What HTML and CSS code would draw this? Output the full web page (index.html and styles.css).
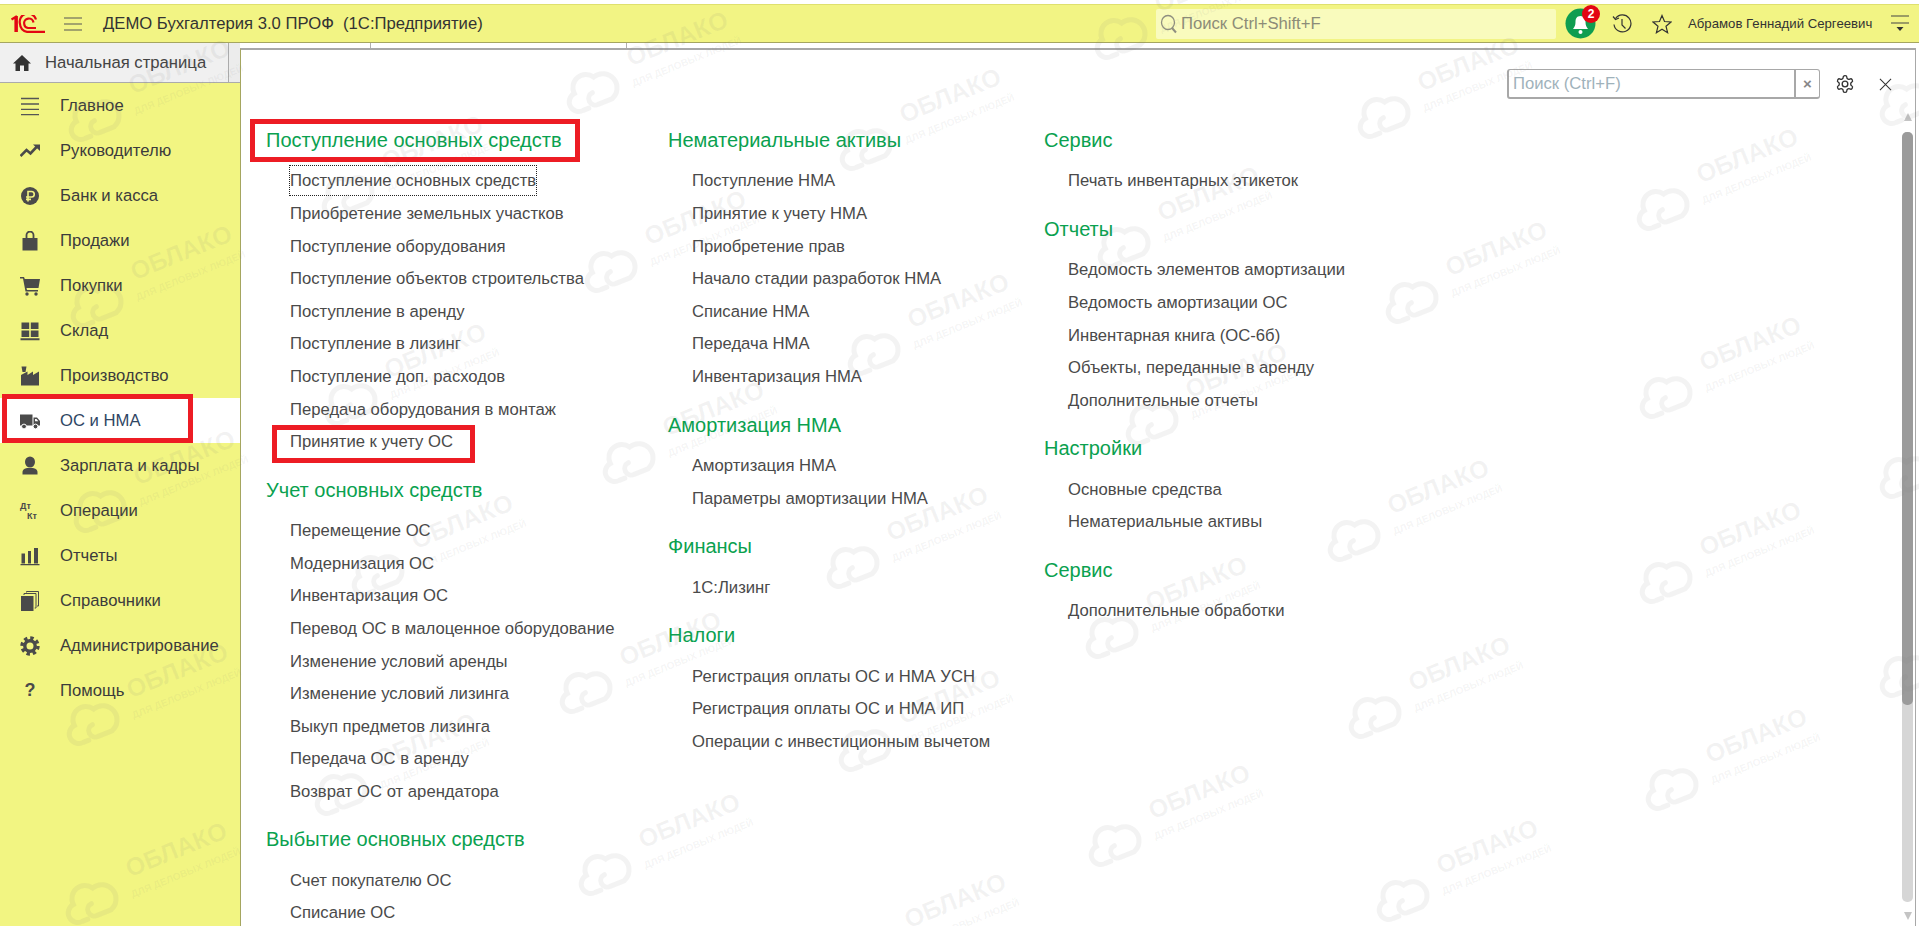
FILE: index.html
```html
<!DOCTYPE html>
<html lang="ru">
<head>
    <meta charset="UTF-8">
    <title>ДЕМО Бухгалтерия 3.0 ПРОФ</title>
    <link rel="stylesheet" href="styles.css">
</head>
<body>
    <header class="topbar">
        <svg class="logo" viewBox="0 0 34 18" fill="none" stroke="#e30613">
            <path d="M0.5 4.5 L4.5 2 V17 M5.8 1 V17" stroke-width="2.2"/>
            <path d="M25 4.5 A8 8 0 0 0 9 9 A8 8 0 0 0 16 16.8 H34" stroke-width="2.2"/>
            <path d="M22.5 7.5 A4.6 4.6 0 0 0 13.2 9 A4.4 4.4 0 0 0 17 13 H25" stroke-width="2.2"/>
        </svg>
        <svg class="burger" viewBox="0 0 18 14" stroke="#555" stroke-width="1.2">
            <path d="M0 1H18M0 7H18M0 13H18"/>
        </svg>
        <div class="app-title">ДЕМО Бухгалтерия 3.0 ПРОФ&nbsp; (1С:Предприятие)</div>
        <div class="global-search">
            <svg class="loupe" viewBox="0 0 18 20" fill="none" stroke="#8f8f80" stroke-width="1.3">
                <ellipse cx="8" cy="8.5" rx="6.5" ry="7"/>
                <path d="M12 14 L16 18.5" stroke-width="2"/>
            </svg>
            <span>Поиск Ctrl+Shift+F</span>
        </div>
        <div class="bell">
            <svg viewBox="0 0 31 31">
                <circle cx="15.5" cy="15.5" r="15" fill="#0f9d50"/>
                <path d="M15.5 8 C11.5 8 10.5 11 10.5 14 C10.5 17.5 9.5 19 8 21 H23 C21.5 19 20.5 17.5 20.5 14 C20.5 11 19.5 8 15.5 8Z" fill="#fff"/>
                <circle cx="15.5" cy="24" r="2" fill="#fff"/>
            </svg>
            <span class="badge">2</span>
        </div>
        <svg class="tool-history" viewBox="0 0 20 22" fill="none" stroke="#333" stroke-width="1.2">
            <path d="M3.5 5.5 A8.5 8.5 0 1 1 2 11.5"/>
            <path d="M1 3.5 L3.5 6.5 L7 5"/>
            <path d="M10 6 V12 L13.5 15.5"/>
        </svg>
        <svg class="tool-star" viewBox="0 0 20 20" fill="none" stroke="#333" stroke-width="1.2">
            <path d="M10 1.5 L12.5 7.5 L19 8 L14 12.2 L15.6 18.7 L10 15.2 L4.4 18.7 L6 12.2 L1 8 L7.5 7.5Z"/>
        </svg>
        <div class="user-name">Абрамов Геннадий Сергеевич</div>
        <svg class="user-menu" viewBox="0 0 18 17">
            <path d="M0 1H18M0 8H18" stroke="#444" stroke-width="1.2"/>
            <path d="M5.5 12H12.5L9 16Z" fill="#333"/>
        </svg>
    </header>

    <div class="workspace">
        <aside class="sidebar">
            <div class="home-tab">
                <svg class="home-icon" viewBox="0 0 18 16" fill="#333">
                    <path d="M9 0 L18 8.5 H15.5 V16 H11 V10.5 H7 V16 H2.5 V8.5 H0Z"/>
                </svg>
                <span>Начальная страница</span>
            </div>
            <nav class="sections">
                <a class="section">
                    <svg viewBox="0 0 20 20" stroke="#555" stroke-width="1.3"><path d="M1 2.5H19M1 8H19M1 13.3H19M1 18.7H19"/></svg>
                    Главное
                </a>
                <a class="section">
                    <svg viewBox="0 0 20 20" fill="none" stroke="#4a4a4a" stroke-width="2.6"><path d="M0.5 15 L6.5 9 L10.5 12.5 L17 5.5"/><path d="M13 3.5 H20 V10Z" fill="#4a4a4a" stroke="none"/></svg>
                    Руководителю
                </a>
                <a class="section">
                    <svg viewBox="0 0 20 20" fill="none"><circle cx="10" cy="10" r="9" fill="#4a4a4a"/><path d="M8 15.5 V5.5 H11.5 A2.7 2.7 0 0 1 11.5 11 H6 M6 13.4 H11" stroke="#f2f482" stroke-width="1.6"/></svg>
                    Банк и касса
                </a>
                <a class="section">
                    <svg viewBox="0 0 20 20" fill="#4a4a4a"><path d="M2.5 7 H17.5 V19.5 H2.5Z"/><path d="M6.5 8 V4 A3.5 3.5 0 0 1 13.5 4 V8" fill="none" stroke="#4a4a4a" stroke-width="1.8"/></svg>
                    Продажи
                </a>
                <a class="section">
                    <svg viewBox="0 0 20 20" fill="#4a4a4a"><path d="M0 1 H4 L4.8 3 H20 L18.5 12 H6.5 L7 14 H18 V15.5 H5.5 L3 2.5 H0Z"/><circle cx="7" cy="18" r="1.7"/><circle cx="16" cy="18" r="1.7"/></svg>
                    Покупки
                </a>
                <a class="section">
                    <svg viewBox="0 0 20 20" fill="#4a4a4a"><path d="M1.5 1.5H9.2V8H1.5ZM10.8 1.5H18.5V8H10.8ZM1.5 9.5H9.2V16H1.5ZM10.8 9.5H18.5V16H10.8ZM0.5 17.2H19.5V19.2H0.5Z"/></svg>
                    Склад
                </a>
                <a class="section">
                    <svg viewBox="0 0 20 20" fill="#4a4a4a"><path d="M1.5 0.5H6.5L5.5 6H2.5ZM1 9 L7.5 5.5 V9 L13 5.5 V9 L19 5.5 V19.5 H1Z"/></svg>
                    Производство
                </a>
                <a class="section active">
                    <svg viewBox="0 0 20 20" fill="#4a4a4a"><path d="M0 3.5H12.5V14.5H0ZM13.5 6.5H17L20 10V14.5H13.5Z"/><path d="M15 8H16.5L18.3 10.3H15Z" fill="#fff"/><circle cx="4" cy="15.5" r="2.4" stroke="#fff"/><circle cx="15.5" cy="15.5" r="2.4" stroke="#fff"/></svg>
                    ОС и НМА
                </a>
                <a class="section">
                    <svg viewBox="0 0 20 20" fill="#4a4a4a"><ellipse cx="10" cy="6" rx="5" ry="5.5"/><path d="M2.5 18.5 V16 C2.5 13.5 5 12.5 7 12 H13 C15 12.5 17.5 13.5 17.5 16 V18.5Z"/></svg>
                    Зарплата и кадры
                </a>
                <a class="section">
                    <span class="dk-icon"><b>Дт</b><b class="kt">Кт</b></span>
                    Операции
                </a>
                <a class="section">
                    <svg viewBox="0 0 20 20" fill="#4a4a4a"><path d="M1.5 7.5H5V17.5H1.5ZM8 5H11V17.5H8ZM14 2H18V17.5H14ZM0.5 18H19.5V19.2H0.5Z"/></svg>
                    Отчеты
                </a>
                <a class="section">
                    <svg viewBox="0 0 20 20" fill="#4a4a4a"><path d="M1 5H13.5V20H1Z"/><path d="M4 4 V2.5 H16 V17 H14.7 M6.5 1.5 V0.5 H18.5 V15 H17" fill="none" stroke="#4a4a4a" stroke-width="1"/></svg>
                    Справочники
                </a>
                <a class="section">
                    <svg viewBox="0 0 20 20" fill="none" stroke="#4a4a4a"><circle cx="10" cy="10" r="5.2" stroke-width="3.4"/><circle cx="10" cy="10" r="8" stroke-width="3.4" stroke-dasharray="3.4 2.88"/></svg>
                    Администрирование
                </a>
                <a class="section">
                    <span class="help-icon">?</span>
                    Помощь
                </a>
            </nav>
        </aside>

        <main class="content">
            <div class="tab-strip"><span class="tab-tick first"></span><span class="tab-tick"></span></div>
            <section class="panel">
                <div class="panel-tools">
                    <div class="find-box">
                        <span class="find-text">Поиск (Ctrl+F)</span>
                        <span class="find-clear">×</span>
                    </div>
                    <svg class="cog" viewBox="0 0 24 24" fill="none" stroke="#333" stroke-width="1.6">
                        <path d="M12.22 2h-.44a2 2 0 0 0-2 2v.18a2 2 0 0 1-1 1.73l-.43.25a2 2 0 0 1-2 0l-.15-.08a2 2 0 0 0-2.73.73l-.22.38a2 2 0 0 0 .73 2.73l.15.1a2 2 0 0 1 1 1.72v.51a2 2 0 0 1-1 1.74l-.15.09a2 2 0 0 0-.73 2.73l.22.38a2 2 0 0 0 2.73.73l.15-.08a2 2 0 0 1 2 0l.43.25a2 2 0 0 1 1 1.73V20a2 2 0 0 0 2 2h.44a2 2 0 0 0 2-2v-.18a2 2 0 0 1 1-1.73l.43-.25a2 2 0 0 1 2 0l.15.08a2 2 0 0 0 2.73-.73l.22-.39a2 2 0 0 0-.73-2.73l-.15-.08a2 2 0 0 1-1-1.74v-.5a2 2 0 0 1 1-1.74l.15-.09a2 2 0 0 0 .73-2.73l-.22-.38a2 2 0 0 0-2.73-.73l-.15.08a2 2 0 0 1-2 0l-.43-.25a2 2 0 0 1-1-1.73V4a2 2 0 0 0-2-2z"/>
                        <circle cx="12" cy="12" r="3.4"/>
                    </svg>
                    <svg class="close" viewBox="0 0 14 14" stroke="#333" stroke-width="1.1"><path d="M1 1L13 13M13 1L1 13"/></svg>
                </div>
                <div class="panel-body">
                    <div class="columns">
                        <div class="col col-first">
                            <h3>Поступление основных средств</h3>
                            <a><span class="focused">Поступление основных средств</span></a>
                            <a>Приобретение земельных участков</a>
                            <a>Поступление оборудования</a>
                            <a>Поступление объектов строительства</a>
                            <a>Поступление в аренду</a>
                            <a>Поступление в лизинг</a>
                            <a>Поступление доп. расходов</a>
                            <a>Передача оборудования в монтаж</a>
                            <a>Принятие к учету ОС</a>
                            <h3>Учет основных средств</h3>
                            <a>Перемещение ОС</a>
                            <a>Модернизация ОС</a>
                            <a>Инвентаризация ОС</a>
                            <a>Перевод ОС в малоценное оборудование</a>
                            <a>Изменение условий аренды</a>
                            <a>Изменение условий лизинга</a>
                            <a>Выкуп предметов лизинга</a>
                            <a>Передача ОС в аренду</a>
                            <a>Возврат ОС от арендатора</a>
                            <h3>Выбытие основных средств</h3>
                            <a>Счет покупателю ОС</a>
                            <a>Списание ОС</a>
                        </div>
                        <div class="col col-second">
                            <h3>Нематериальные активы</h3>
                            <a>Поступление НМА</a>
                            <a>Принятие к учету НМА</a>
                            <a>Приобретение прав</a>
                            <a>Начало стадии разработок НМА</a>
                            <a>Списание НМА</a>
                            <a>Передача НМА</a>
                            <a>Инвентаризация НМА</a>
                            <h3>Амортизация НМА</h3>
                            <a>Амортизация НМА</a>
                            <a>Параметры амортизации НМА</a>
                            <h3>Финансы</h3>
                            <a>1С:Лизинг</a>
                            <h3>Налоги</h3>
                            <a>Регистрация оплаты ОС и НМА УСН</a>
                            <a>Регистрация оплаты ОС и НМА ИП</a>
                            <a>Операции с инвестиционным вычетом</a>
                        </div>
                        <div class="col">
                            <h3>Сервис</h3>
                            <a>Печать инвентарных этикеток</a>
                            <h3>Отчеты</h3>
                            <a>Ведомость элементов амортизации</a>
                            <a>Ведомость амортизации ОС</a>
                            <a>Инвентарная книга (ОС-6б)</a>
                            <a>Объекты, переданные в аренду</a>
                            <a>Дополнительные отчеты</a>
                            <h3>Настройки</h3>
                            <a>Основные средства</a>
                            <a>Нематериальные активы</a>
                            <h3>Сервис</h3>
                            <a>Дополнительные обработки</a>
                        </div>
                    </div>
                    <div class="scrollbar">
                        <span class="arrow up"></span>
                        <div class="track"><div class="thumb"></div></div>
                        <span class="arrow down"></span>
                    </div>
                </div>
            </section>
        </main>
    </div>

    <!-- watermark tiles, scattered over the whole window -->
    <svg class="watermarks" width="1919" height="926">
        <defs>
            <g id="wm" transform="rotate(-22)">
                <text class="wm-title" y="9">ОБЛАКО</text>
                <text class="wm-sub" y="29">ДЛЯ ДЕЛОВЫХ ЛЮДЕЙ</text>
                <path class="wm-cloud" d="M-108 32 H-114 A9.5 9.5 0 0 1 -116 13 A13 13 0 0 1 -92 5 A10 10 0 0 1 -83 32 H-98 A6.5 6.5 0 0 1 -99 19"/>
            </g>
        </defs>
        <use href="#wm" x="179" y="66"/>
        <use href="#wm" x="181" y="252"/>
        <use href="#wm" x="184" y="457"/>
        <use href="#wm" x="177" y="670"/>
        <use href="#wm" x="176" y="849"/>
        <use href="#wm" x="432" y="142"/>
        <use href="#wm" x="435" y="350"/>
        <use href="#wm" x="462" y="521"/>
        <use href="#wm" x="425" y="740"/>
        <use href="#wm" x="677" y="38"/>
        <use href="#wm" x="695" y="217"/>
        <use href="#wm" x="713" y="408"/>
        <use href="#wm" x="670" y="638"/>
        <use href="#wm" x="689" y="820"/>
        <use href="#wm" x="950" y="95"/>
        <use href="#wm" x="958" y="300"/>
        <use href="#wm" x="937" y="513"/>
        <use href="#wm" x="949" y="696"/>
        <use href="#wm" x="955" y="900"/>
        <use href="#wm" x="1205" y="-16"/>
        <use href="#wm" x="1208" y="193"/>
        <use href="#wm" x="1236" y="370"/>
        <use href="#wm" x="1196" y="583"/>
        <use href="#wm" x="1199" y="791"/>
        <use href="#wm" x="1468" y="63"/>
        <use href="#wm" x="1496" y="248"/>
        <use href="#wm" x="1438" y="486"/>
        <use href="#wm" x="1459" y="663"/>
        <use href="#wm" x="1487" y="846"/>
        <use href="#wm" x="1747" y="155"/>
        <use href="#wm" x="1750" y="343"/>
        <use href="#wm" x="1750" y="528"/>
        <use href="#wm" x="1756" y="735"/>
        <use href="#wm" x="1990" y="50"/>
        <use href="#wm" x="1990" y="423"/>
        <use href="#wm" x="1990" y="622"/>
    </svg>

    <!-- red annotation frames drawn on top of the shot -->
    <div class="mark mark-section"></div>
    <div class="mark mark-heading"></div>
    <div class="mark mark-item"></div>
</body>
</html>
```

FILE: styles.css
```css
* {
    box-sizing: border-box;
}

html, body {
    height: 926px;
    overflow: hidden;
}

body {
    margin: 0;
    padding-top: 4px;
    display: flex;
    flex-direction: column;
    font-family: "Liberation Sans", Arial, sans-serif;
    font-size: 16.67px;
    color: #444;
    background-color: #ffffff;
}

/* top bar */
.topbar {
    height: 39px;
    flex: none;
    display: flex;
    align-items: center;
    padding-left: 11px;
    background-color: #f2f484;
    border-top: 1px solid #dfe06e;
    border-bottom: 1px solid #a5a660;
}

.logo {
    width: 34px;
    height: 18px;
}

.burger {
    width: 18px;
    height: 14px;
    margin-left: 19px;
}

.app-title {
    flex: 1;
    margin-left: 21px;
    color: #333;
}

.global-search {
    width: 400px;
    height: 30px;
    display: flex;
    align-items: center;
    padding-left: 4px;
    background-color: #f9fbbd;
    border-radius: 2px;
    color: #8c8c78;
}

.loupe {
    width: 18px;
    height: 20px;
    margin-right: 3px;
}

.bell {
    position: relative;
    width: 31px;
    height: 31px;
    margin-left: 9px;
}

.bell svg {
    display: block;
}

.badge {
    position: absolute;
    top: -3px;
    right: -4px;
    width: 18px;
    height: 18px;
    border-radius: 50%;
    background-color: #e30613;
    color: #fff;
    font-size: 12px;
    font-weight: bold;
    line-height: 18px;
    text-align: center;
}

.tool-history {
    width: 20px;
    height: 22px;
    margin-left: 16px;
}

.tool-star {
    width: 20px;
    height: 20px;
    margin-left: 20px;
}

.user-name {
    margin-left: 16px;
    width: 186px;
    font-size: 13.2px;
    color: #333;
    white-space: nowrap;
}

.user-menu {
    width: 18px;
    height: 17px;
    margin-left: 17px;
    margin-right: 10px;
}

/* window below the bar */
.workspace {
    flex: 1;
    display: flex;
    min-height: 0;
}

.sidebar {
    width: 240px;
    flex: none;
    background-color: #f2f582;
}

.home-tab {
    height: 40px;
    display: flex;
    align-items: center;
    padding-left: 13px;
    color: #444;
    background: linear-gradient(to right, #f0f0f0 228px, #ababab 228px, #ababab 229px, #ececec 229px);
    border-bottom: 1px solid #ababab;
}

.home-icon {
    width: 18px;
    height: 16px;
    margin-right: 14px;
}

.section {
    height: 45px;
    display: flex;
    align-items: center;
    gap: 20px;
    padding-left: 20px;
    color: #3c3c3c;
}

.section svg {
    width: 20px;
    height: 20px;
    flex: none;
}

.section.active {
    background-color: #fff;
    color: #2f4664;
}

.dk-icon {
    width: 20px;
    height: 20px;
    display: flex;
    flex-direction: column;
    font-size: 9px;
    line-height: 10px;
    color: #4a4a4a;
}

.dk-icon .kt {
    margin-left: 7px;
}

.help-icon {
    width: 20px;
    font-size: 18px;
    font-weight: bold;
    text-align: center;
    color: #4a4a4a;
}

.content {
    flex: 1;
    display: flex;
    flex-direction: column;
    min-width: 0;
}

.tab-strip {
    height: 5px;
    flex: none;
    display: flex;
}

.tab-tick {
    width: 256px;
    border-right: 1px solid #b0b0b0;
}

.tab-tick.first {
    width: 131px;
}

.panel {
    flex: 1;
    min-height: 0;
    display: flex;
    flex-direction: column;
    margin-right: 3px;
    border-top: 2px solid #a8a8a8;
    border-left: 1px solid #a5a660;
    border-right: 1px solid #a8a8a8;
    background-color: #fff;
}

.panel-tools {
    height: 58px;
    flex: none;
    display: flex;
    align-items: flex-start;
    justify-content: flex-end;
    padding-top: 19px;
    padding-right: 23px;
}

.find-box {
    width: 313px;
    height: 30px;
    display: flex;
    border: 1px solid #a8a8a8;
    border-width: 1px 1px 2px 2px;
    border-radius: 3px;
}

.find-text {
    flex: 1;
    padding-left: 4px;
    line-height: 27px;
    color: #9fb2bb;
}

.find-clear {
    width: 25px;
    line-height: 27px;
    text-align: center;
    font-weight: bold;
    font-size: 15px;
    color: #888;
    border-left: 2px solid #a8a8a8;
}

.cog {
    width: 20px;
    height: 20px;
    margin-top: 5px;
    margin-left: 15px;
}

.close {
    width: 13px;
    height: 13px;
    margin-top: 9px;
    margin-left: 24px;
}

.panel-body {
    flex: 1;
    min-height: 0;
    display: flex;
}

.columns {
    flex: 1;
    display: flex;
    padding: 20px 0 0 25px;
    overflow: hidden;
}

.col {
    flex: none;
}

.col-first {
    width: 402px;
}

.col-second {
    width: 376px;
}

.col h3 {
    height: 24px;
    margin: 19px 0 13.4px;
    font-size: 20px;
    font-weight: normal;
    line-height: 24px;
    color: #0aa14f;
}

.col h3:first-child {
    margin-top: 0;
}

.col a {
    display: block;
    height: 32.6px;
    padding-left: 24px;
    line-height: 32.6px;
    color: #4a4a4a;
    white-space: nowrap;
}

.focused {
    padding: 5px 0;
    outline: 1px dotted #222;
}

.scrollbar {
    width: 11px;
    flex: none;
    display: flex;
    flex-direction: column;
    align-items: center;
    margin-right: 2px;
    padding: 5px 0 6px;
}

.arrow {
    width: 0;
    height: 0;
    flex: none;
    border-left: 4px solid transparent;
    border-right: 4px solid transparent;
}

.arrow.up {
    border-bottom: 8px solid #c4c4c4;
    margin-bottom: 11px;
}

.arrow.down {
    border-top: 8px solid #c4c4c4;
    margin-top: 10px;
}

.track {
    flex: 1;
    width: 11px;
    background-color: #d6d6d6;
    border-radius: 5px;
}

.thumb {
    height: 573px;
    background-color: #9b9b9b;
    border-radius: 5px;
}

/* overlays */
.watermarks {
    position: absolute;
    top: 0;
    left: 0;
    pointer-events: none;
}

.wm-title {
    font-size: 25px;
    font-weight: bold;
    text-anchor: middle;
    fill: rgba(120, 120, 120, 0.09);
}

.wm-sub {
    font-size: 10px;
    font-weight: bold;
    text-anchor: middle;
    fill: rgba(120, 120, 120, 0.08);
}

.wm-cloud {
    fill: none;
    stroke: rgba(120, 120, 120, 0.09);
    stroke-width: 5;
    stroke-linecap: round;
}

.mark {
    position: absolute;
    border: 5px solid #ed1c24;
}

.mark-section {
    left: 2px;
    top: 394px;
    width: 191px;
    height: 49px;
}

.mark-heading {
    left: 250px;
    top: 119px;
    width: 330px;
    height: 43px;
}

.mark-item {
    left: 272px;
    top: 425px;
    width: 203px;
    height: 38px;
}
```
